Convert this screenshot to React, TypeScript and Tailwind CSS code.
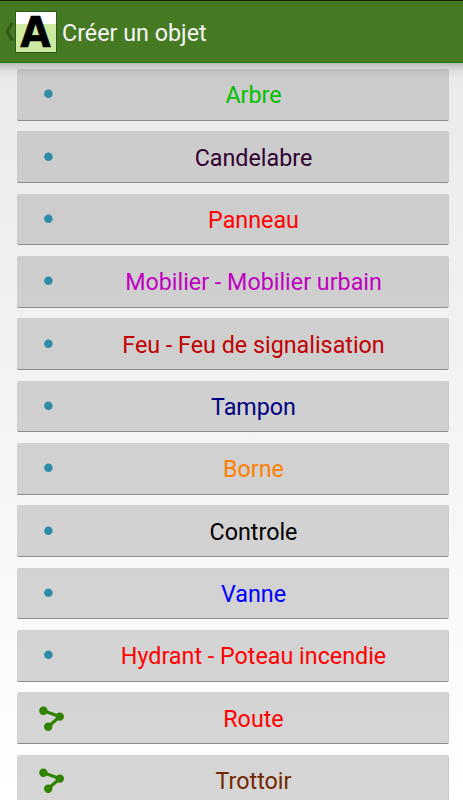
type Geometry = "point" | "line";

interface ObjectType {
  label: string;
  color: string;
  geometry: Geometry;
}

const objectTypes: ObjectType[] = [
  { label: "Arbre", color: "text-[#00c000]", geometry: "point" },
  { label: "Candelabre", color: "text-[#300030]", geometry: "point" },
  { label: "Panneau", color: "text-[#ff0000]", geometry: "point" },
  { label: "Mobilier - Mobilier urbain", color: "text-[#c000c0]", geometry: "point" },
  { label: "Feu - Feu de signalisation", color: "text-[#c00000]", geometry: "point" },
  { label: "Tampon", color: "text-[#000080]", geometry: "point" },
  { label: "Borne", color: "text-[#ff8000]", geometry: "point" },
  { label: "Controle", color: "text-[#000000]", geometry: "point" },
  { label: "Vanne", color: "text-[#0000ff]", geometry: "point" },
  { label: "Hydrant - Poteau incendie", color: "text-[#ff0000]", geometry: "point" },
  { label: "Route", color: "text-[#ff0000]", geometry: "line" },
  { label: "Trottoir", color: "text-[#702800]", geometry: "line" },
];

function GeometryIcon({ geometry }: { geometry: Geometry }) {
  return (
    <svg className="ml-[15px] h-8 w-8 shrink-0" viewBox="0 0 32 32">
      {geometry === "point" ? (
        <circle cx="16.4" cy="15.7" r="4.3" fill="#308ca6" />
      ) : (
        <g fill="#2f8200">
          <path d="M11.4 8.8L27.7 14.6L16.1 24.8" fill="none" stroke="#2f8200" strokeWidth="3.2" />
          <circle cx="11.4" cy="8.8" r="4.2" />
          <circle cx="27.8" cy="14.6" r="4.2" />
          <circle cx="16.2" cy="24.7" r="4.2" />
        </g>
      )}
    </svg>
  );
}

function ActionBar() {
  return (
    <header className="relative flex h-[63px] shrink-0 items-center border-t border-b border-t-[#102008] border-b-[#1c7800] bg-[#457a22]">
      <svg className="ml-[4px] h-[19px] w-[10px]" viewBox="0 0 10 19" fill="none">
        <path d="M8.5 .6L3 9.5L8.5 18.4" stroke="#315a18" strokeWidth="3" />
      </svg>
      <svg className="ml-[1px] h-[42px] w-[42px] overflow-visible" viewBox="0 0 42 42">
        <rect width="42" height="42" fill="#285a18" />
        <rect x="1" y="1" width="40" height="12" fill="#fff" />
        <rect x="1" y="13" width="40" height="28" fill="#cdeaa0" />
        <text
          x="20.6"
          y="36"
          textAnchor="middle"
          fontFamily="DejaVu Sans, sans-serif"
          fontWeight="700"
          fontSize="42"
          textLength="30.5"
          lengthAdjust="spacingAndGlyphs"
          stroke="#000"
          strokeWidth=".6"
        >
          A
        </text>
      </svg>
      <h1 className="ml-[5px] pt-[3px] text-[23.3px] text-[#f5f5f5]">Créer un objet</h1>
      {/* Shadow cast on the list */}
      <div className="pointer-events-none absolute inset-x-0 top-[62px] h-[15px] bg-linear-to-b from-black/20 via-black/6 to-transparent" />
    </header>
  );
}

export default function App() {
  return (
    <div className="flex h-[800px] w-[463px] flex-col overflow-hidden bg-linear-to-b from-[#e8e8e8] to-white font-['Roboto',sans-serif]">
      <ActionBar />
      <main className="flex flex-col gap-[10.66px] pt-[6px] pr-[14px] pl-[17px]">
        {objectTypes.map((item) => (
          <button
            key={item.label}
            type="button"
            className="flex h-[51.7px] shrink-0 items-center rounded-[2px] border-r border-b border-r-[#cacaca] border-b-[#8c8c8c] bg-[#a7a7a7]/47"
          >
            <GeometryIcon geometry={item.geometry} />
            <span className={`flex-1 pt-[3px] pr-[5px] text-center text-[23.3px] whitespace-nowrap ${item.color}`}>
              {item.label}
            </span>
          </button>
        ))}
      </main>
    </div>
  );
}
